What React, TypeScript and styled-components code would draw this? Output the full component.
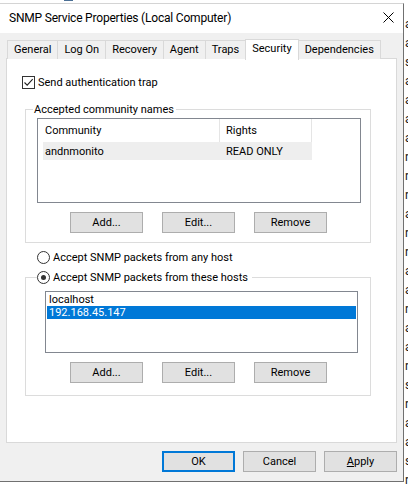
import React from 'react';
import styled, { createGlobalStyle } from 'styled-components';

const GlobalStyle = createGlobalStyle`
  html, body {
    margin: 0;
    padding: 0;
    background: #ffffff;
  }
  body {
    width: 408px;
    height: 486px;
    overflow: hidden;
    font-family: Roboto, "Liberation Sans", Arial, sans-serif;
    font-size: 11px;
    color: #000;
  }
`;

const Desktop = styled.div`
  position: relative;
  width: 408px;
  height: 486px;
  overflow: hidden;
  background: #ffffff;
`;

/* the services list behind the dialog, only its edges peek out */
const Backdrop = styled.div`
  position: absolute;
  inset: 0;
  font-size: 12px;
  color: #1a1a1a;
`;

const BackdropTop = styled.div`
  display: flex;
  align-items: center;
  height: 16px;
  margin-top: -12px;
  padding-left: 64px;
  gap: 10px;
  white-space: nowrap;
`;

const BackdropIcon = styled.span`
  width: 10px;
  height: 10px;
  background: #4a6f95;
`;

const BackdropCell = styled.span<{ $w: number }>`
  width: ${(p) => p.$w}px;
  overflow: hidden;
`;

const BackdropColumn = styled.div`
  display: grid;
  grid-auto-rows: 19px;
  align-items: center;
  padding-top: 10px;
  padding-left: 405px;
`;

const BackdropLetter = styled.span`
  line-height: 14px;
`;

const Window = styled.div`
  position: absolute;
  left: -1px;
  top: 3px;
  width: 405px;
  height: 479px;
  box-sizing: border-box;
  border: 1px solid #707070;
  border-top-color: #d4d4d4;
  background: #f0f0f0;
  display: flex;
  flex-direction: column;
`;

const TitleBar = styled.div`
  height: 29px;
  flex: none;
  background: #ffffff;
  display: flex;
  align-items: flex-start;
  justify-content: space-between;
  padding-left: 9px;
`;

const Title = styled.span`
  font-size: 12px;
  letter-spacing: -0.2px;
  line-height: 16px;
  margin-top: 6px;
  color: #000;
`;

const CloseIcon = styled.svg`
  margin-top: 8px;
  margin-right: 9px;
`;

const Body = styled.div`
  flex: 1;
  display: flex;
  flex-direction: column;
  padding: 6px 6px 0 7px;
`;

const TabStrip = styled.div`
  display: flex;
  align-items: flex-end;
  height: 20px;
  padding-left: 1px;
  margin-bottom: -1px;
  position: relative;
  z-index: 1;
`;

const Tab = styled.div<{ $active?: boolean }>`
  box-sizing: border-box;
  height: ${(p) => (p.$active ? 21 : 19)}px;
  margin-left: -1px;
  margin-bottom: ${(p) => (p.$active ? -1 : 0)}px;
  padding: 2px 6px 0;
  border: 1px solid #d9d9d9;
  border-bottom: none;
  background: ${(p) => (p.$active ? '#ffffff' : '#f0f0f0')};
  line-height: 14px;
  white-space: nowrap;
  position: relative;
  z-index: ${(p) => (p.$active ? 2 : 0)};
`;

const Panel = styled.div`
  box-sizing: border-box;
  width: 391px;
  height: 385px;
  margin-left: -1px;
  border: 1px solid #d9d9d9;
  background: #ffffff;
  display: flex;
  flex-direction: column;
  align-items: flex-start;
`;

const OptionRow = styled.label<{ $top: number; $left: number }>`
  display: flex;
  align-items: center;
  gap: 3px;
  height: 15px;
  margin-top: ${(p) => p.$top}px;
  margin-left: ${(p) => p.$left}px;
  line-height: 15px;
  white-space: nowrap;
`;

const CheckBox = styled.span`
  box-sizing: border-box;
  width: 13px;
  height: 13px;
  border: 1px solid #333333;
  background: #ffffff;
  display: flex;
  align-items: center;
  justify-content: center;
`;

const RadioCircle = styled.span<{ $checked?: boolean }>`
  box-sizing: border-box;
  width: 13px;
  height: 13px;
  border: 1px solid #333333;
  border-radius: 50%;
  background: #ffffff;
  display: flex;
  align-items: center;
  justify-content: center;
  &::after {
    content: '';
    display: ${(p) => (p.$checked ? 'block' : 'none')};
    width: 5px;
    height: 5px;
    border-radius: 50%;
    background: #333333;
  }
`;

const GroupBox = styled.fieldset<{ $top: number; $bottom: number }>`
  box-sizing: border-box;
  width: 346px;
  margin: ${(p) => p.$top}px 0 0 18px;
  padding: 0 0 ${(p) => p.$bottom}px 0;
  min-width: 0;
  border: 1px solid #dcdcdc;
  display: flex;
  flex-direction: column;
  align-items: flex-start;
`;

const GroupLegend = styled.legend<{ $indent: number; $pad: string }>`
  margin-left: ${(p) => p.$indent}px;
  padding: ${(p) => p.$pad};
  line-height: 15px;
  height: 15px;
  white-space: nowrap;
`;

const ListView = styled.div`
  box-sizing: border-box;
  width: 324px;
  height: 85px;
  margin: 1px 0 0 11px;
  padding-left: 5px;
  border: 1px solid #828790;
  background: #ffffff;
  display: flex;
  flex-direction: column;
`;

const ListRow = styled.div<{ $header?: boolean; $shaded?: boolean }>`
  display: flex;
  height: ${(p) => (p.$header ? 23 : 18)}px;
  width: 269px;
  background: ${(p) => (p.$shaded ? '#eeeeee' : 'transparent')};
`;

const Cell = styled.div<{ $w: number; $pad: number; $divider?: boolean }>`
  box-sizing: border-box;
  width: ${(p) => p.$w}px;
  padding-left: ${(p) => p.$pad}px;
  border-right: 1px solid ${(p) => (p.$divider ? '#e5e5e5' : 'transparent')};
  display: flex;
  align-items: center;
  white-space: nowrap;
  color: #000;
`;

const ListBox = styled.div`
  box-sizing: border-box;
  width: 313px;
  height: 62px;
  margin: 6px 0 0 19px;
  padding: 1px 1px 0;
  border: 1px solid #828790;
  background: #ffffff;
  display: flex;
  flex-direction: column;
`;

const ListItem = styled.div<{ $selected?: boolean }>`
  height: 13px;
  line-height: 13px;
  padding-left: 2px;
  background: ${(p) => (p.$selected ? '#0078d7' : 'transparent')};
  color: ${(p) => (p.$selected ? '#ffffff' : '#000000')};
  white-space: nowrap;
`;

const ButtonRow = styled.div`
  display: flex;
  gap: 19px;
  margin-top: 9px;
  padding-left: 44px;
`;

const Button = styled.button<{ $default?: boolean }>`
  box-sizing: border-box;
  width: 73px;
  height: 21px;
  padding: 0;
  border: ${(p) => (p.$default ? '2px solid #0078d7' : '1px solid #adadad')};
  background: #e1e1e1;
  font-family: inherit;
  font-size: 11px;
  color: #000;
  line-height: 15px;
`;

const Footer = styled.div`
  display: flex;
  justify-content: flex-end;
  gap: 8px;
  margin-top: 8px;
`;

const backdropLetters = 'aasaaaarrrarraaraarsraasr'.split('');

export default function App() {
  return (
    <>
      <GlobalStyle />
      <Desktop>
        <Backdrop>
          <BackdropTop>
            <BackdropIcon />
            <BackdropCell $w={150}>Software Protection</BackdropCell>
            <BackdropCell $w={140}>Enables the download...</BackdropCell>
            <BackdropCell $w={40}>Automatic</BackdropCell>
          </BackdropTop>
          <BackdropColumn>
            {backdropLetters.map((l, i) => (
              <BackdropLetter key={i}>{l}</BackdropLetter>
            ))}
          </BackdropColumn>
        </Backdrop>

        <Window>
          <TitleBar>
            <Title>SNMP Service Properties (Local Computer)</Title>
            <CloseIcon width="11" height="11" viewBox="0 0 11 11">
              <path d="M0.5 0.5 L10.5 10.5 M10.5 0.5 L0.5 10.5" stroke="#000" strokeWidth="1" fill="none" />
            </CloseIcon>
          </TitleBar>

          <Body>
            <TabStrip>
              <Tab>General</Tab>
              <Tab>Log On</Tab>
              <Tab>Recovery</Tab>
              <Tab>Agent</Tab>
              <Tab>Traps</Tab>
              <Tab $active>Security</Tab>
              <Tab>Dependencies</Tab>
            </TabStrip>

            <Panel>
              <OptionRow $top={16} $left={15}>
                <CheckBox>
                  <svg width="11" height="11" viewBox="0 0 11 11">
                    <path d="M1.5 5.5 L4.2 8.2 L9.7 2.2" stroke="#222" strokeWidth="1.1" fill="none" />
                  </svg>
                </CheckBox>
                Send authentication trap
              </OptionRow>

              <GroupBox $top={12} $bottom={9}>
                <GroupLegend $indent={7} $pad="0 2px 0 1px">Accepted community names</GroupLegend>
                <ListView>
                  <ListRow $header>
                    <Cell $w={177} $pad={2} $divider>Community</Cell>
                    <Cell $w={92} $pad={6} $divider>Rights</Cell>
                  </ListRow>
                  <ListRow $shaded>
                    <Cell $w={177} $pad={2}>andnmonito</Cell>
                    <Cell $w={92} $pad={6}>READ ONLY</Cell>
                  </ListRow>
                </ListView>
                <ButtonRow>
                  <Button>Add...</Button>
                  <Button>Edit...</Button>
                  <Button>Remove</Button>
                </ButtonRow>
              </GroupBox>

              <OptionRow $top={7} $left={30}>
                <RadioCircle />
                Accept SNMP packets from any host
              </OptionRow>

              <GroupBox $top={5} $bottom={12}>
                <GroupLegend $indent={11} $pad="0 4px 0 0">
                  <OptionRow $top={0} $left={0}>
                    <RadioCircle $checked />
                    Accept SNMP packets from these hosts
                  </OptionRow>
                </GroupLegend>
                <ListBox>
                  <ListItem>localhost</ListItem>
                  <ListItem $selected>192.168.45.147</ListItem>
                </ListBox>
                <ButtonRow>
                  <Button>Add...</Button>
                  <Button>Edit...</Button>
                  <Button>Remove</Button>
                </ButtonRow>
              </GroupBox>
            </Panel>

            <Footer>
              <Button $default>OK</Button>
              <Button>Cancel</Button>
              <Button>
                <u>A</u>pply
              </Button>
            </Footer>
          </Body>
        </Window>
      </Desktop>
    </>
  );
}
